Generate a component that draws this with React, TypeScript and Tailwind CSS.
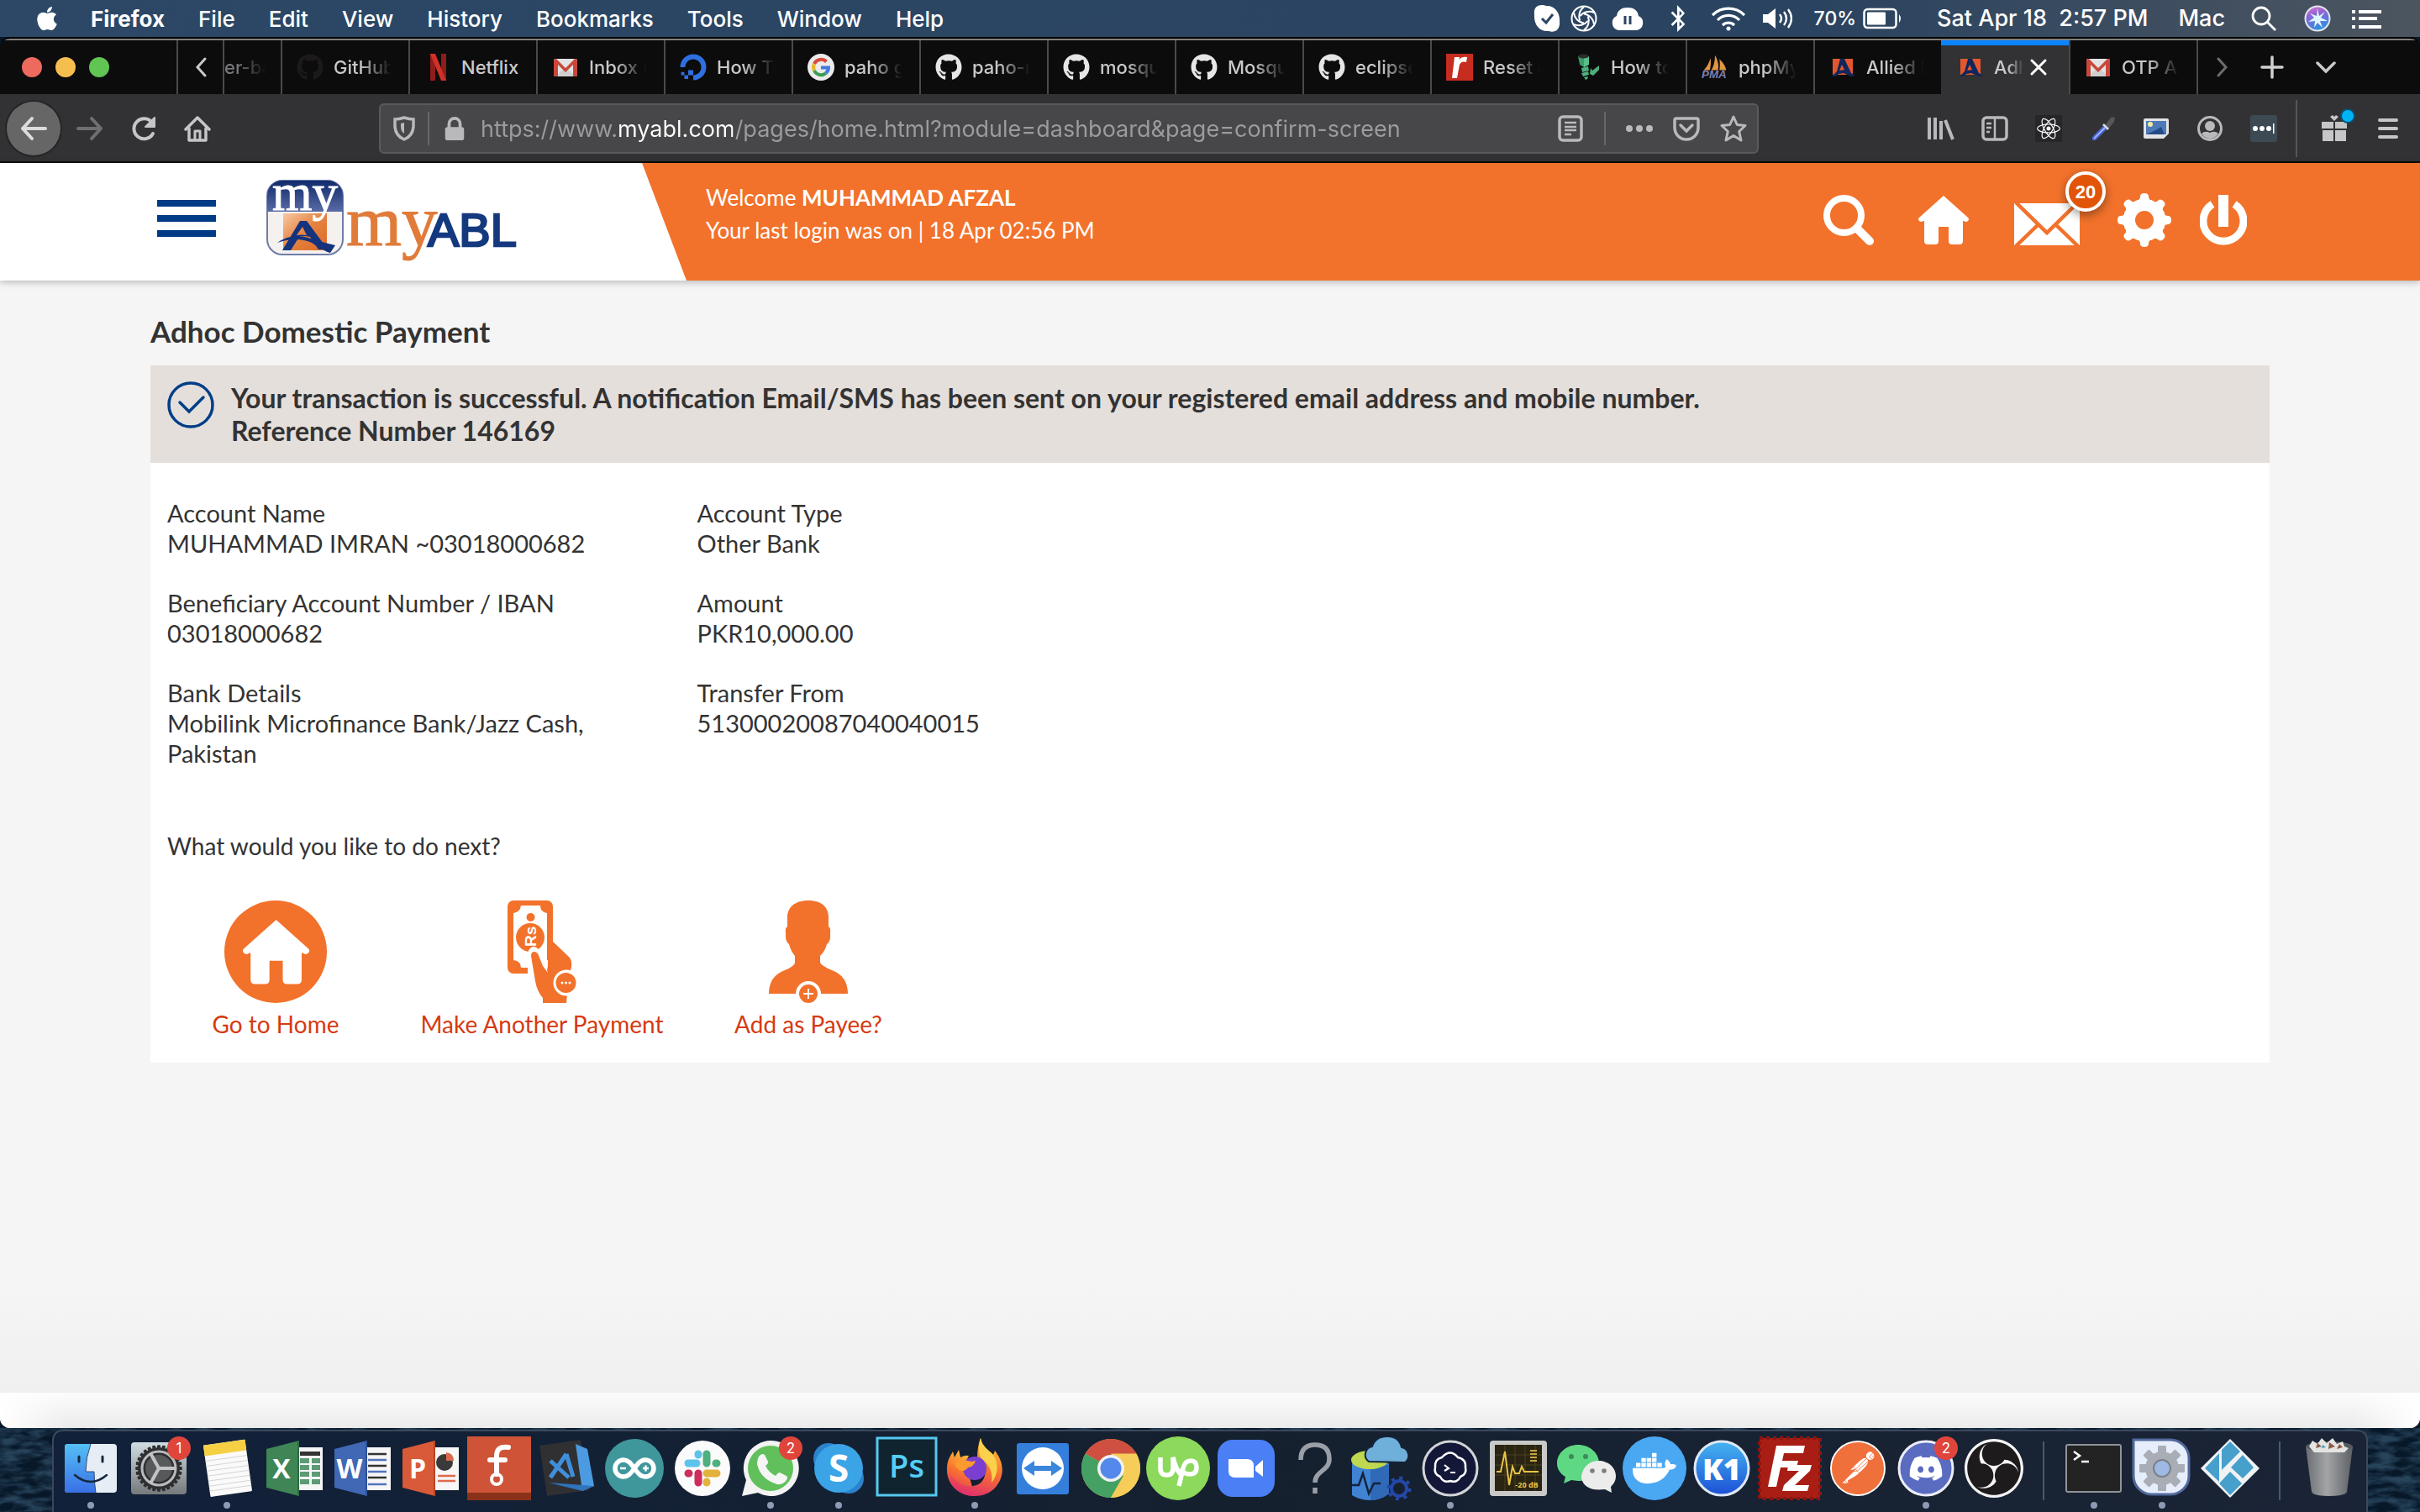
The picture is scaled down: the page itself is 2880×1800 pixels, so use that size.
import React from "react";
import type { ReactNode } from "react";
import {
  FaApple,
  FaGithub,
  FaBluetoothB,
  FaDocker,
  FaDiscord,
  FaDigitalOcean,
  FaReact,
} from "react-icons/fa";
import { SiPostman, SiObsstudio } from "react-icons/si";

/* ---------- macOS menu bar ---------- */

const menus = ["File", "Edit", "View", "History", "Bookmarks", "Tools", "Window", "Help"];

function MenuBar() {
  return (
    <header className="flex h-11 shrink-0 items-center bg-linear-to-r from-[#2c4866] via-[#2a4360] via-75% to-[#4c555f] pr-[46px] pl-10 text-[27px] font-medium text-white">
      <button aria-label="Apple menu" className="w-7">
        <FaApple size={32} />
      </button>
      <nav className="ml-10 flex items-center gap-10 text-[26px]">
        <button className="font-bold">Firefox</button>
        {menus.map((m) => (
          <button key={m}>{m}</button>
        ))}
      </nav>
      <div className="ml-auto flex items-center">
        <svg className="mr-3 size-8" viewBox="0 0 32 32" aria-label="Skype">
          <path fill="#fff" d="M10 0C4 0 0 4 1 11c-1 12 6 21 17 20 8 3 14-3 13-11C32 8 24 0 15 1c-2-1-3-1-5-1z" />
          <path d="M10 16l5 5 8-10" fill="none" stroke="#2b4462" strokeWidth="3" />
        </svg>
        <svg className="mr-4 size-8" viewBox="0 0 32 32" fill="none" stroke="#fff" strokeWidth="2" aria-label="Sync">
          <circle cx="16" cy="16" r="14.5" />
          {[0, 60, 120, 180, 240, 300].map((a) => (
            <path key={a} d="M16 10.500A14 14 0 0 1 28 23" transform={`rotate(${a} 16 16)`} />
          ))}
        </svg>
        <svg className="mr-[30px] h-8 w-10" viewBox="0 0 40 32" aria-label="Cloud backup">
          <path fill="#fff" d="M9 30a9 9 0 0 1-2-17C8 6 13 3 20 3s12 3 13 10a9 9 0 0 1-2 17z" />
          <path d="M17 13v10M23 13v10" stroke="#2b4462" strokeWidth="3" />
        </svg>
        <FaBluetoothB className="mr-[30px] h-8 w-5" aria-label="Bluetooth" />
        <svg className="mr-5 h-8 w-10" viewBox="0 0 40 32" fill="none" stroke="#fff" strokeWidth="3.200" aria-label="Wi-Fi">
          <path d="M1 12a27 27 0 0 1 38 0M7 18a18 18 0 0 1 26 0M13 24a10 10 0 0 1 14 0" />
          <circle cx="20" cy="28" r="2.500" fill="#fff" stroke="none" />
        </svg>
        <svg className="mr-[26px] h-8 w-9" viewBox="0 0 36 32" fill="none" stroke="#fff" strokeWidth="2.400" aria-label="Volume">
          <path d="M1 11h6l9-7v24l-9-7H1z" fill="#fff" stroke="none" />
          <path d="M21 11q4 5 0 10M26 8q6 8 0 16M31 5q8 11 0 22" />
        </svg>
        <span className="text-[23px]">70%</span>
        <svg className="mr-10 ml-2 h-7 w-12" viewBox="0 0 48 28" aria-label="Battery">
          <rect x="1.500" y="3" width="38" height="22" rx="4" fill="none" stroke="#fff" strokeWidth="2.500" />
          <rect x="5" y="6.500" width="22" height="15" rx="1" fill="#fff" />
          <path d="M43 9q4 5 0 10z" fill="#fff" />
        </svg>
        <span className="mr-9 whitespace-pre">Sat Apr 18  2:57 PM</span>
        <span className="mr-[30px]">Mac</span>
        <svg className="mr-8 size-8" viewBox="0 0 32 32" fill="none" stroke="#fff" strokeWidth="2.800" aria-label="Spotlight">
          <circle cx="13" cy="13" r="10" />
          <path d="M20 20l10 10" />
        </svg>
        <svg className="mr-6 size-8" viewBox="0 0 32 32" aria-label="Siri">
          <defs>
            <linearGradient id="siri" x1="0" y1="0" x2="0.300" y2="1">
              <stop offset="0" stopColor="#e879c8" />
              <stop offset="0.400" stopColor="#8e63d6" />
              <stop offset="1" stopColor="#2f8fe0" />
            </linearGradient>
          </defs>
          <circle cx="16" cy="16" r="14.500" fill="url(#siri)" stroke="#e2e6f0" strokeWidth="2" />
          <path d="M16 4l2 9 7-5-5 7 8 4-9 0 3 8-6-6-4 6 1-8-8 1 7-5-5-5 8 3z" fill="#dff6ff" />
        </svg>
        <svg className="h-7 w-9" viewBox="0 0 36 28" stroke="#fff" strokeWidth="4" aria-label="Notifications">
          <path d="M1 6h4M1 14h4M1 24h4M9 6h27M9 14h22M9 24h27" />
        </svg>
      </div>
    </header>
  );
}

/* ---------- favicons ---------- */

const Gmail = () => (
  <svg viewBox="0 0 32 32" className="size-8">
    <rect x="2" y="6" width="28" height="21" rx="2" fill="#e3e3e3" />
    <path d="M4 27l12-11 12 11z" fill="#cfcfcf" />
    <path d="M2 8q0-2 3-2l11 11L27 6q3 0 3 2v17q0 2-2 2h-3V13l-9 9-9-9v14H4q-2 0-2-2z" fill="#c8473a" />
  </svg>
);
const Octocat = () => <FaGithub size={32} color="#e6e6e6" />;
const Allied = () => (
  <svg viewBox="0 0 32 32" className="size-8">
    <rect x="4" y="6" width="24" height="19" fill="#e4572e" />
    <path d="M13 6h5l8 17 5 3-5 1-9-4-6 1-3 3H3l6-6zm2 7l-3 7 6-1z" fill="#10265c" fillRule="evenodd" />
  </svg>
);
const Netflix = () => (
  <svg viewBox="0 0 32 32" className="size-8">
    <path d="M7 0h6v32H7zM20 0h6v32h-6z" fill="#8f1d1a" />
    <path d="M7 0h6l13 32h-6z" fill="#d03028" />
  </svg>
);
const Google = () => (
  <svg viewBox="0 0 32 32" className="size-8">
    <circle cx="16" cy="16" r="16" fill="#ebebeb" />
    <g fill="none" strokeWidth="4">
      <path d="M22.500 9.500A9 9 0 0 0 8 12" stroke="#d9493c" />
      <path d="M8 12a9 9 0 0 0 0 8" stroke="#eab42c" />
      <path d="M8 20a9 9 0 0 0 14 3" stroke="#3b9c55" />
      <path d="M22 23q3-3 3-6.500h-9" stroke="#4079e0" />
    </g>
  </svg>
);
const RedR = () => (
  <svg viewBox="0 0 32 32" className="size-8">
    <rect width="32" height="32" fill="#c62d20" />
    <path d="M10 4h6l-.5 3Q19 3 25 4l-1 6q-6-2-8 3l-3 16H7z" fill="#fff" />
  </svg>
);
const GreenGuy = () => (
  <svg viewBox="0 0 32 32" className="size-8">
    <path d="M5 3l7 2 6-2v10l-6 3-5-3z" fill="#3f9a68" />
    <path d="M12 5l6-2v10l-6 3z" fill="#57c08a" />
    <ellipse cx="11.500" cy="3" rx="6" ry="2.500" fill="#2b2b2b" />
    <path d="M9 17l8-2 1 5-8 2zM9 23l8-2 1 4-7 2zM12 28l5-1-1 3-2 1zM20 17l2 3 8-6v5l-7 7-4-2z" fill="#4fae7c" />
  </svg>
);
const Pma = () => (
  <svg viewBox="0 0 36 32" className="h-8 w-9">
    <path d="M3 20Q9 14 12 4q1 9-1 16zM13 20Q18 12 18 0q6 10 4 20zM24 20q1-7 0-15 8 8 9 15z" fill="#df9642" />
    <text x="0" y="31" fontSize="15" fontWeight="900" fontStyle="italic" fontFamily="Liberation Sans" fill="#7d7fb4">
      PMA
    </text>
  </svg>
);

type Tab = { title: string; icon?: ReactNode; active?: boolean };
const tabs: Tab[] = [
  { title: "GitHub", icon: <FaGithub size={32} color="#1c1919" /> },
  { title: "Netflix", icon: <Netflix /> },
  { title: "Inbox (", icon: <Gmail /> },
  { title: "How To", icon: <FaDigitalOcean size={32} color="#2f6fe0" /> },
  { title: "paho g", icon: <Google /> },
  { title: "paho-m", icon: <Octocat /> },
  { title: "mosqu", icon: <Octocat /> },
  { title: "Mosqu", icon: <Octocat /> },
  { title: "eclipse", icon: <Octocat /> },
  { title: "Reset a", icon: <RedR /> },
  { title: "How to", icon: <GreenGuy /> },
  { title: "phpMy", icon: <Pma /> },
  { title: "Allied B", icon: <Allied /> },
  { title: "Adh", icon: <Allied />, active: true },
  { title: "OTP Al", icon: <Gmail /> },
];

const fade = "overflow-hidden whitespace-nowrap [mask-image:linear-gradient(90deg,#000_45%,transparent_98%)]";

function TabStrip() {
  return (
    <div className="flex h-[66px] items-stretch border-t-2 border-[#80807c] bg-[#0c0c0d] text-[22px] font-medium text-[#c9c9ca]">
      <div className="flex w-[210px] items-center gap-4 pl-[26px]">
        <span className="size-6 rounded-full bg-[#ed6a5e]" />
        <span className="size-6 rounded-full bg-[#f5bf4f]" />
        <span className="size-6 rounded-full bg-[#61c554]" />
      </div>
      <button aria-label="Scroll tabs left" className="flex w-[57px] items-center justify-center border-x-2 border-[#4a4a4b]">
        <svg viewBox="0 0 14 24" className="h-6 w-3.5" fill="none" stroke="#c9c9ca" strokeWidth="3" strokeLinecap="round">
          <path d="M12 2L3 12l9 10" />
        </svg>
      </button>
      <div className="flex w-[67px] items-center">
        <span className="w-[50px] overflow-hidden whitespace-nowrap text-[#77777a] [mask-image:linear-gradient(90deg,#000_30%,transparent)]">er-ba</span>
      </div>
      <div className="flex min-w-0 flex-1">
        {tabs.map((t, i) =>
          t.active ? (
            <div key={i} className="flex min-w-0 flex-1 items-center border-t-[6px] border-[#0a84ff] bg-[#323234] pb-[6px] pl-[19px]">
              {t.icon}
              <span className={`ml-3 w-9 ${fade}`}>{t.title}</span>
              <button aria-label="Close tab" className="ml-1.5">
                <svg viewBox="0 0 22 22" className="size-[22px]" stroke="#fff" strokeWidth="3" strokeLinecap="round">
                  <path d="M3 3l16 16M19 3L3 19" />
                </svg>
              </button>
            </div>
          ) : (
            <button key={i} className="flex min-w-0 flex-1 items-center border-l-2 border-[#4a4a4b] pl-[17px] text-left">
              <span className="flex w-8 shrink-0 justify-center">{t.icon}</span>
              <span className={`ml-3 w-[70px] ${t.title === "Netflix" ? "" : fade}`}>{t.title}</span>
            </button>
          ),
        )}
      </div>
      <div className="flex w-[266px] items-center border-l-2 border-[#4a4a4b] pl-[22px]">
        <button aria-label="Scroll tabs right">
          <svg viewBox="0 0 14 24" className="h-6 w-3.5" fill="none" stroke="#6d6d6e" strokeWidth="3" strokeLinecap="round">
            <path d="M2 2l9 10-9 10" />
          </svg>
        </button>
        <button aria-label="New tab" className="ml-[38px]">
          <svg viewBox="0 0 28 28" className="size-7" stroke="#d0d0d1" strokeWidth="3.500" strokeLinecap="round">
            <path d="M14 2v24M2 14h24" />
          </svg>
        </button>
        <button aria-label="List all tabs" className="ml-[38px]">
          <svg viewBox="0 0 24 24" className="size-6" fill="none" stroke="#c9c9ca" strokeWidth="3.500" strokeLinecap="round">
            <path d="M2 7l10 10L22 7" />
          </svg>
        </button>
      </div>
    </div>
  );
}

/* ---------- toolbar ---------- */

const ic = "size-8 fill-none stroke-[#b9b9bb] stroke-[3.5]";

function Toolbar() {
  return (
    <div className="flex h-[82px] items-center border-b-2 border-[#0c0c0d] bg-[#323234] pt-0.5 pl-2">
      <button aria-label="Back" className="flex size-16 items-center justify-center rounded-full bg-[#666667] ring-2 ring-[#252526]">
        <svg viewBox="0 0 32 32" className="size-8" fill="none" stroke="#dcdcdd" strokeWidth="4" strokeLinecap="round" strokeLinejoin="round">
          <path d="M30 16H3M14 4L3 16l11 12" />
        </svg>
      </button>
      <button aria-label="Forward" className="ml-[19px]">
        <svg viewBox="0 0 32 32" className="size-8" fill="none" stroke="#6f6f70" strokeWidth="4" strokeLinecap="round" strokeLinejoin="round">
          <path d="M2 16h27M18 4l11 12-11 12" />
        </svg>
      </button>
      <button aria-label="Reload" className="ml-8">
        <svg viewBox="0 0 32 32" className="size-8" fill="none" stroke="#c6c6c8" strokeWidth="4" strokeLinecap="round">
          <path d="M27 22A12 12 0 1 1 26 9" />
          <path d="M29 3v11H18z" fill="#c6c6c8" strokeWidth="2" strokeLinejoin="round" />
        </svg>
      </button>
      <button aria-label="Home" className="ml-8">
        <svg viewBox="0 0 32 32" className="size-8" fill="none" stroke="#c6c6c8" strokeWidth="3.500" strokeLinecap="round" strokeLinejoin="round">
          <path d="M2 17L16 3l14 14M6 16v14h20V16" />
          <path d="M13 29V19h6v10" strokeWidth="3" />
        </svg>
      </button>
      <div className="ml-[200px] flex h-[60px] w-[1642px] items-center rounded-md border-2 border-[#5a5a5c] bg-[#474749] pl-3">
        <svg viewBox="0 0 32 32" className={ic} aria-label="Tracking protection">
          <path d="M16 3q6 2 11 2v9q-1 11-11 15Q6 25 5 14V5q5 0 11-2z" />
          <path d="M16 9v13q-4-3-4-8v-4z" fill="#b9b9bb" strokeWidth="0" />
        </svg>
        <span className="ml-3 h-10 w-0.5 bg-[#67676a]" />
        <svg viewBox="0 0 28 32" className="ml-4 h-[30px] w-7" aria-label="Secure connection">
          <path d="M7 16v-6a7 7 0 0 1 14 0v6" fill="none" stroke="#b9b9bb" strokeWidth="4" />
          <rect x="2" y="14" width="24" height="17" rx="3" fill="#b9b9bb" />
        </svg>
        <input
          aria-label="Address"
          readOnly
          value="https://www.myabl.com/pages/home.html?module=dashboard&page=confirm-screen"
          className="ml-[17px] min-w-0 flex-1 bg-[linear-gradient(90deg,#9c9c9e_162px,#fff_162px,#fff_300px,#9c9c9e_300px)] bg-clip-text pt-0.5 text-[27px] text-transparent outline-none"
        />
        <svg viewBox="0 0 32 32" className={ic} aria-label="Reader view">
          <rect x="3" y="2" width="26" height="28" rx="4" />
          <path d="M9 9h14M9 14h14M9 18h14M9 23h8" strokeWidth="2.500" />
        </svg>
        <span className="ml-6 h-10 w-0.5 bg-[#67676a]" />
        <svg viewBox="0 0 32 32" className="ml-6 size-8 fill-[#b9b9bb]" aria-label="Page actions">
          <circle cx="4" cy="16" r="4" />
          <circle cx="16" cy="16" r="4" />
          <circle cx="28" cy="16" r="4" />
        </svg>
        <svg viewBox="0 0 32 32" className={`ml-6 ${ic}`} aria-label="Save to Pocket">
          <path d="M4 4h24q2 0 2 2v9a14 14 0 0 1-28 0V6q0-2 2-2z" />
          <path d="M9 12l7 7 7-7" strokeLinecap="round" />
        </svg>
        <svg viewBox="0 0 32 32" className={`mr-3 ml-6 ${ic}`} aria-label="Bookmark">
          <path d="M16 2l4.300 9.500L30 12.500l-7.300 7L25 30l-9-5.500L7 30l2.300-10.500-7.300-7 9.700-1z" strokeLinejoin="round" strokeWidth="3" />
        </svg>
      </div>
      <div className="ml-auto flex items-center gap-8">
        <svg viewBox="0 0 32 32" className={ic} aria-label="Library">
          <path d="M2 3v26M9 3v26M16 7v22M21 6l9 23" strokeWidth="4" />
        </svg>
        <svg viewBox="0 0 32 32" className={ic} aria-label="Sidebar">
          <rect x="2" y="3" width="28" height="26" rx="4" />
          <path d="M16 3v26M6 10h6M6 15h6M6 20h4" strokeWidth="2.500" />
        </svg>
        <span className="flex size-8 items-center justify-center bg-[#262628]">
          <FaReact size={28} color="#fff" />
        </span>
        <svg viewBox="0 0 32 32" className="size-8" aria-label="Colour picker">
          <path d="M19 12L27 2l4 1-1 5-7 9z" fill="#55555a" />
          <path d="M17 13l4 4L8 30H4v-4z" fill="#4b66d8" />
          <path d="M17 11l6 6" stroke="#d7dcf2" strokeWidth="2.500" />
          <path d="M6 28L19 15" stroke="#b9c6ff" strokeWidth="1.500" />
        </svg>
        <svg viewBox="0 0 32 32" className="size-8" aria-label="Screenshot">
          <path d="M3 4h26q2 0 2 2v16l-6 6H3q-2 0-2-2V6q0-2 2-2z" fill="#e3e3e6" />
          <rect x="4" y="7" width="24" height="16" fill="#4e7bb8" />
          <path d="M4 23h22l-4-9-5 3-4 2z" fill="#234b86" />
          <circle cx="9" cy="11" r="3" fill="#f5e9a0" />
        </svg>
        <svg viewBox="0 0 32 32" className={ic} aria-label="Account">
          <circle cx="16" cy="16" r="13.500" strokeWidth="3" />
          <circle cx="16" cy="13" r="6" fill="#b9b9bb" stroke="none" />
          <path d="M6 22q4-4 10-1 6-3 10 1-4 6-10 6T6 22z" fill="#b9b9bb" stroke="none" />
        </svg>
        <svg viewBox="0 0 32 32" className="size-8" aria-label="Password manager">
          <rect width="32" height="32" rx="3" fill="#3d4a54" />
          <g fill="#fff">
            <circle cx="6" cy="16" r="3" />
            <circle cx="14" cy="16" r="3" />
            <circle cx="22" cy="16" r="3" />
            <rect x="27" y="10" width="1.500" height="12" />
          </g>
        </svg>
      </div>
      <span className="ml-[22px] h-[68px] w-0.5 bg-[#565658]" />
      <button aria-label="What's new" className="relative ml-7">
        <svg viewBox="0 0 32 32" className="size-8 fill-[#c6c6c8]">
          <path d="M1 8h14v8H1zM17 8h14v8H17zM2 18h13v13H2zM17 18h13v13H17zM16 7l-5-5 3-2 2 2 2-2 3 2z" />
        </svg>
        <span className="absolute -top-1.5 right-[-7px] size-3.5 rounded-full bg-[#00b3f4] ring-2 ring-[#0b4f70]" />
      </button>
      <button aria-label="Open menu" className="mr-[26px] ml-9">
        <svg viewBox="0 0 24 28" className="h-7 w-6" stroke="#c6c6c8" strokeWidth="4" strokeLinecap="round">
          <path d="M2 4h20M2 14h20M2 24h20" />
        </svg>
      </button>
    </div>
  );
}

/* ---------- bank site ---------- */

function BankLogo() {
  return (
    <svg viewBox="0 0 300 102" className="ml-[60px] h-[102px] w-[300px]" role="img" aria-label="myABL">
      <defs>
        <linearGradient id="navy" x1="0" y1="0" x2="0" y2="1">
          <stop offset="0" stopColor="#0f2a6b" />
          <stop offset="1" stopColor="#5a6ba6" />
        </linearGradient>
        <linearGradient id="orng" x1="0" y1="0" x2="1" y2="1">
          <stop offset="0" stopColor="#f8c9a4" />
          <stop offset="0.500" stopColor="#e58240" />
          <stop offset="1" stopColor="#dd6a24" />
        </linearGradient>
      </defs>
      <rect x="1" y="1" width="90" height="88" rx="18" fill="#f4f1ef" stroke="#6f7da8" strokeWidth="2" />
      <path d="M1 38V19A18 18 0 0 1 19 1h54a18 18 0 0 1 18 18v19z" fill="url(#navy)" />
      <rect x="20" y="40" width="52" height="44" fill="url(#orng)" />
      <path d="M40 49h8l25 34H62L52 68q-8-2-13 0L29 84H19zM43 56l-7 10q6-1 12 0z" fill="#15337d" fillRule="evenodd" />
      <path d="M13 75q18-13 40-5 12 4 29 8l-6 9q-8-2-22-12-18-8-41 0z" fill="#15337d" />
      <text x="7" y="36" fontSize="61" fontFamily="Liberation Serif" fill="#fff" stroke="#fff">
        my
      </text>
      <text x="95" y="78" fontSize="85" fontFamily="Liberation Serif" fill="#e07b39" stroke="#e07b39">
        my
      </text>
      <text x="192" y="79" fontSize="56" fontFamily="Liberation Sans" fill="#15397f" stroke="#15397f" strokeWidth="2.500">
        ABL
      </text>
    </svg>
  );
}

const homeShape = "M30 0L1 26q-2 2 0 4 2 2 5 0h1v24q0 4 4 4h9q4 0 4-4V37h12v17q0 4 4 4h9q4 0 4-4V30h1q3 2 5 0 2-2 0-4z";

function SiteHeader() {
  return (
    <div className="relative z-10 flex h-[140px] bg-[#f2722b] shadow-[0_2px_8px_rgba(0,0,0,0.25)]">
      <div className="flex w-[817px] shrink-0 items-start bg-white pl-[187px] [clip-path:polygon(0_0,764px_0,100%_100%,0_100%)]">
        <button aria-label="Menu" className="mt-11 flex w-[70px] flex-col gap-2.5">
          <span className="h-2 w-full bg-[#003b86]" />
          <span className="h-2 w-full bg-[#003b86]" />
          <span className="h-2 w-full bg-[#003b86]" />
        </button>
        <div className="mt-5">
          <BankLogo />
        </div>
      </div>
      <div className="pt-[22px] pl-[23px] font-[Lato,sans-serif] text-[26px] leading-[39px] text-white">
        <p>
          Welcome <b>MUHAMMAD AFZAL</b>
        </p>
        <p>Your last login was on | 18 Apr 02:56 PM</p>
      </div>
      <div className="mr-[206px] ml-auto flex h-[136px] items-center text-white">
        <button aria-label="Search">
          <svg viewBox="0 0 60 60" className="size-[60px]" fill="none" stroke="#fff">
            <circle cx="24.500" cy="24.500" r="20.500" strokeWidth="8" />
            <path d="M41 41l14 14" strokeWidth="10" strokeLinecap="round" />
          </svg>
        </button>
        <button aria-label="Home" className="ml-[53px]">
          <svg viewBox="0 0 60 58" className="h-[58px] w-[60px]" fill="#fff">
            <path d={homeShape} />
          </svg>
        </button>
        <button aria-label="Messages, 20 unread" className="relative ml-[54px] mt-2.5">
          <svg viewBox="0 0 78 50" className="h-[50px] w-[78px]">
            <rect width="78" height="50" fill="#fff" />
            <path d="M2-1l37 36L76-1M2 51l27-26M76 51L49 25" fill="none" stroke="#f2722b" strokeWidth="4.500" />
          </svg>
          <span className="absolute -top-[38px] left-[61px] flex size-12 items-center justify-center rounded-full border-4 border-white bg-[#e25407] font-['Liberation_Sans',sans-serif] text-[22px] font-bold shadow-[0_4px_12px_rgba(0,0,0,0.4)]">
            20
          </span>
        </button>
        <button aria-label="Settings" className="ml-[45px]">
          <svg viewBox="0 0 64 64" className="size-16">
            <g fill="#fff">
              <circle cx="32" cy="32" r="25" />
              {[0, 45, 90, 135, 180, 225, 270, 315].map((a) => (
                <path key={a} d="M21 9q6 0 6-5 0-4 5-4t5 4q0 5 6 5l-4 10H25z" transform={`rotate(${a} 32 32)`} />
              ))}
            </g>
            <circle cx="32" cy="32" r="11" fill="#f2722b" />
          </svg>
        </button>
        <button aria-label="Log out" className="ml-[34px]">
          <svg viewBox="0 0 56 60" className="h-[60px] w-14" fill="none" stroke="#fff">
            <path d="M15 11a24 24 0 1 0 26 0" strokeWidth="9" />
            <path d="M28 0v38" strokeWidth="12" />
          </svg>
        </button>
      </div>
    </div>
  );
}

const details: [string, string][] = [
  ["Account Name", "MUHAMMAD IMRAN ~03018000682"],
  ["Account Type", "Other Bank"],
  ["Beneficiary Account Number / IBAN", "03018000682"],
  ["Amount", "PKR10,000.00"],
  ["Bank Details", "Mobilink Microfinance Bank/Jazz Cash, Pakistan"],
  ["Transfer From", "51300020087040040015"],
];

const HomeAction = () => (
  <svg viewBox="0 0 122 122" className="size-[122px]">
    <circle cx="61" cy="61" r="61" fill="#f2722b" />
    <path d={homeShape} fill="#fff" transform="translate(22 23) scale(1.320)" />
  </svg>
);
const PayAction = () => (
  <svg viewBox="0 0 82 122" className="h-[122px] w-[82px]">
    <rect width="54" height="87" rx="7" fill="#f2722b" />
    <path d="M16 6h23q0 8 8 9v70H25V80h-9q0-8-9-9V15q8-1 9-9z" fill="#fff" />
    <circle cx="27.500" cy="20" r="5" fill="#f2722b" />
    <circle cx="27" cy="44" r="17" fill="#f2722b" />
    <text transform="translate(34 55) rotate(-90)" fontSize="19" fontWeight="700" fontFamily="Liberation Sans" fill="#fff">
      Rs
    </text>
    <path d="M24 90V64q1-9 8-9 6 1 9 13l6 18 1-3-1-5v-7h8v50z" fill="#fff" />
    <path d="M54 49l20 19q3 5 2 11l-3 12-3 31H42V116q-7-8-9-20L28 66q0-5 4-5t6 7l4 10 6 8V49z" fill="#f2722b" />
    <circle cx="70" cy="98" r="15.500" fill="#fff" />
    <circle cx="69.500" cy="98" r="12" fill="#f2722b" />
    <g fill="#fff">
      <circle cx="65" cy="98" r="1.500" />
      <circle cx="69.500" cy="98" r="1.500" />
      <circle cx="74" cy="98" r="1.500" />
    </g>
  </svg>
);
const PayeeAction = () => (
  <svg viewBox="0 0 94 122" className="h-[122px] w-[94px]">
    <path
      d="M47 0c17 0 24 9 24 20v11q3 2 2 8 1 10-4 13-2 8-8 14v8q2 4 14 9 19 7 19 28H0Q0 90 19 83q12-5 12-9v-8q-5-6-7-14-5-4-4-13-1-6 2-8V20C22 9 30 0 47 0z"
      fill="#f2722b"
    />
    <circle cx="47" cy="111" r="15" fill="#fff" />
    <circle cx="47" cy="111" r="11" fill="#f2722b" />
    <path d="M47 105v12M41 111h12" stroke="#fff" strokeWidth="1.800" />
  </svg>
);

function PaymentPage() {
  return (
    <main className="flex flex-1 flex-col bg-linear-to-b from-[#f5f5f5] from-90% to-[#f0f0f0] px-[179px] font-[Lato,sans-serif] text-[29px] leading-9 text-[#333]">
      <h1 className="pt-[38px] pb-[19px] text-[35px] leading-[44px] font-bold">Adhoc Domestic Payment</h1>
      <div role="status" className="flex items-start gap-5 bg-[#e5dfdc] px-5 pt-[19px] pb-4">
        <svg viewBox="0 0 56 56" className="size-[56px]" fill="none" stroke="#003f87" strokeWidth="3.500">
          <circle cx="28" cy="28" r="26" />
          <path d="M15 25l11 11 17-17" strokeLinecap="round" />
        </svg>
        <p className="pb-[3px] text-[32px] leading-[39px] font-bold">
          Your transaction is successful. A notification Email/SMS has been sent on your registered email address and mobile number.
          <br />
          Reference Number 146169
        </p>
      </div>
      <section className="bg-white pt-[42px]">
        <dl className="grid w-1/2 grid-cols-2 gap-y-[35px]">
          {details.map(([k, v]) => (
            <div key={k} className="px-5">
              <dt>{k}</dt>
              <dd>{v}</dd>
            </div>
          ))}
        </dl>
        <p className="mt-[74px] px-5 text-[28px]">What would you like to do next?</p>
        <div className="mt-[47px] flex pb-7 pl-5 text-[28px] text-[#d63a11]">
          <a href="#home" className="flex w-[258px] flex-col items-center gap-[7px]">
            <HomeAction />
            Go to Home
          </a>
          <a href="#payment" className="flex w-[376px] flex-col items-center gap-[7px]">
            <PayAction />
            Make Another Payment
          </a>
          <a href="#payee" className="flex w-[258px] flex-col items-center gap-[7px]">
            <PayeeAction />
            Add as Payee?
          </a>
        </div>
      </section>
    </main>
  );
}

/* ---------- dock ---------- */

const T = ({ x, y, s, f, w = 700, children }: { x: number; y: number; s: number; f: string; w?: number; children: string }) => (
  <text x={x} y={y} fontSize={s} fill={f} fontWeight={w} fontFamily="Open Sans, sans-serif" textAnchor="middle">
    {children}
  </text>
);

const Disc = ({ r = 33, fill, ring }: { r?: number; fill: string; ring?: string }) => (
  <circle cx="38" cy="38" r={r} fill={fill} stroke={ring} strokeWidth={ring ? 3 : 0} />
);

const Gear = ({ r, n, fill, tooth }: { r: number; n: number; fill: string; tooth: number }) => (
  <g fill={fill}>
    <circle cx="38" cy="38" r={r} />
    {Array.from({ length: n }, (_, i) => (
      <rect key={i} x={38 - tooth / 2} y={38 - r - tooth * 0.7} width={tooth} height={tooth * 1.4} rx="1" transform={`rotate(${(i * 360) / n} 38 38)`} />
    ))}
  </g>
);

function Office({ color, dark, letter, children }: { color: string; dark: string; letter: string; children: ReactNode }) {
  return (
    <>
      <rect x="34" y="13" width="37" height="51" fill="#f6f6f6" />
      {children}
      <path d="M4 15l39-10v66L4 61z" fill={color} />
      <path d="M41 6l2-1v66l-2-1z" fill={dark} />
      <T x={22} y={50} s={32} f="#fff">{letter}</T>
    </>
  );
}

type DockApp = { name: string; running?: boolean; badge?: string; art: ReactNode };

const apps: DockApp[] = [
  {
    name: "Finder",
    running: true,
    art: (
      <>
        <rect x="7" y="9" width="62" height="58" rx="4" fill="#e6edf5" />
        <path d="M11 9h27q-6 16-6 33h10q0 13 2 25H11q-4 0-4-4V13q0-4 4-4z" fill="url(#finder)" />
        <path d="M38 9q-6 16-6 33h10q0 13 2 25" fill="none" stroke="#2b4a78" strokeWidth="1" />
        <path d="M24 24v6M52 24v6" stroke="#16283c" strokeWidth="3" strokeLinecap="round" />
        <path d="M19 46q19 16 38 0" fill="none" stroke="#16283c" strokeWidth="2.500" strokeLinecap="round" />
      </>
    ),
  },
  {
    name: "System Preferences",
    badge: "1",
    art: (
      <>
        <rect x="5" y="7" width="66" height="62" rx="4" fill="url(#steel)" />
        <Gear r={25} n={28} fill="#2f2f31" tooth={4} />
        <circle cx="38" cy="38" r="20" fill="none" stroke="#b9bbbd" strokeWidth="3" />
        <circle cx="38" cy="38" r="16" fill="#58595b" />
        <path d="M38 38L28 20M38 38h20M38 38L28 56" stroke="#c2c4c6" strokeWidth="4" />
      </>
    ),
  },
  {
    name: "Notes",
    running: true,
    art: (
      <g transform="rotate(-8 38 38)">
        <rect x="14" y="7" width="50" height="62" rx="1" fill="#fafafa" />
        <rect x="14" y="7" width="50" height="13" fill="#f6d043" />
        <path d="M14 26h50M14 32h50M14 38h50M14 44h50M14 50h50M14 56h50M14 62h50" stroke="#d5d5d5" />
      </g>
    ),
  },
  {
    name: "Excel",
    art: (
      <Office color="#3f8556" dark="#2d6a41" letter="X">
        <path d="M44 18h24v5H44z" fill="#333" />
        <path d="M44 26h11v6H44zM58 26h10v6H58zM44 34h11v6H44zM58 34h10v6H58zM44 42h11v6H44zM58 42h10v6H58zM44 51h11v6H44zM58 51h10v6H58z" fill="#5d9a75" />
      </Office>
    ),
  },
  {
    name: "Word",
    art: (
      <Office color="#4068b4" dark="#2f5196" letter="W">
        <path d="M44 21h22M44 35h22M44 49h22" stroke="#333" strokeWidth="2.500" />
        <path d="M44 28h22M44 42h22M44 57h22" stroke="#5273bd" strokeWidth="2.500" />
      </Office>
    ),
  },
  {
    name: "PowerPoint",
    art: (
      <Office color="#d95a38" dark="#b84426" letter="P">
        <circle cx="54" cy="31" r="10" fill="#3a3a3a" />
        <path d="M56 29V19q9 1 9 10z" fill="#dd6a4c" />
        <path d="M46 47h21M46 53h21" stroke="#dd6a4c" strokeWidth="2.500" />
      </Office>
    ),
  },
  {
    name: "Fritzing",
    art: (
      <>
        <path d="M0 0h76v76H0z" fill="#cf5336" />
        <path d="M0 67h76v9H0z" fill="#8a3219" />
        <path d="M49 13q-14-2-14 10v22M27 28h18" fill="none" stroke="#fff" strokeWidth="6" strokeLinecap="round" />
        <circle cx="35" cy="51" r="6" fill="none" stroke="#fff" strokeWidth="4" />
      </>
    ),
  },
  {
    name: "Visual Studio Code",
    art: (
      <>
        <path d="M5 11L54 4l10 60-50 7z" fill="#303033" />
        <path d="M48 9l14 6 8 44-14 6z" fill="#4c9be2" />
        <path d="M16 55l54 4-14 6z" fill="#2f74bd" />
        <path d="M18 29l22 20M37 21L18 49M37 21l8 27" stroke="#3f8fdb" strokeWidth="5" fill="none" />
      </>
    ),
  },
  {
    name: "Arduino",
    art: (
      <>
        <Disc r={35} fill="#3f979c" />
        <g fill="none" stroke="#fff" strokeWidth="5.500">
          <path d="M38 38c-5-7-8-10-13-10a10 10 0 0 0 0 20c5 0 8-3 13-10zM38 38c5-7 8-10 13-10a10 10 0 0 1 0 20c-5 0-8-3-13-10z" />
          <path d="M21 38h7M48 38h7M51.500 34.500v7" strokeWidth="2.500" />
        </g>
      </>
    ),
  },
  {
    name: "Slack",
    art: (
      <>
        <Disc fill="#fbfbfb" />
        <g strokeWidth="9" strokeLinecap="round">
          <path d="M21 32h10M33 21v1" stroke="#5cc3ea" />
          <path d="M43 21v11M54 32h1" stroke="#4fb07f" />
          <path d="M43 44h12M43 54v1" stroke="#e3b23c" />
          <path d="M33 44v11M21 44h1" stroke="#ce2d5d" />
        </g>
      </>
    ),
  },
  {
    name: "WhatsApp",
    running: true,
    badge: "2",
    art: (
      <>
        <path d="M38 5a33 33 0 1 1-15 62L4 71l5-19A33 33 0 0 1 38 5z" fill="#f3f3f3" />
        <circle cx="38" cy="38" r="27" fill="#61c05b" />
        <path
          d="M26 22q3-2 5 0l4 8q1 2-3 5 4 8 12 12 3-4 5-4l8 4q2 2 0 5-4 6-11 5-20-6-24-24 0-8 4-11z"
          fill="#f5f5f5"
        />
      </>
    ),
  },
  {
    name: "Skype",
    running: true,
    art: (
      <>
        <circle cx="26" cy="26" r="18" fill="#2c83cd" />
        <circle cx="50" cy="50" r="18" fill="#2c83cd" />
        <circle cx="38" cy="38" r="29" fill="#3ba4e6" />
        <T x={38} y={54} s={44} f="#fff">S</T>
      </>
    ),
  },
  {
    name: "Photoshop",
    art: (
      <>
        <rect x="3" y="2" width="70" height="68" fill="#10242f" stroke="#55c8f0" strokeWidth="3" />
        <T x={38} y={49} s={38} f="#55cdf7" w={600}>Ps</T>
      </>
    ),
  },
  {
    name: "Firefox",
    running: true,
    art: (
      <>
        <path d="M38 71C18 71 4 56 5 38c0-9 4-15 7-20l2 7 5-9 2 9q5-3 10-2l-4 8z" fill="url(#fox)" />
        <path d="M45 2c2 11 10 14 15 20l2-5c8 10 11 22 7 33C64 63 53 71 38 71 20 71 8 60 8 44c8 12 20 18 32 14 9-3 13-14 9-24q-2-5-8-9 0-12 4-23z" fill="url(#fox)" />
        <path d="M45 2c2 11 10 14 15 20 7 10 6 24-2 33 2-13-3-22-12-28-4-8-4-17-1-25z" fill="#fbd04a" />
        <circle cx="38" cy="38" r="14" fill="#7a3fd0" />
        <path d="M14 32q8-6 20-2l5-1q-2 7-9 8-6 8-14 0z" fill="#fb9b2e" />
      </>
    ),
  },
  {
    name: "TeamViewer",
    art: (
      <>
        <rect x="7" y="8" width="62" height="61" rx="3" fill="#357fdc" />
        <circle cx="38" cy="38" r="25" fill="#fff" />
        <path d="M15 38l13-9v6h20v-6l13 9-13 9v-6H28v6z" fill="#3a86dd" />
      </>
    ),
  },
  {
    name: "Chrome",
    art: (
      <>
        <Disc r={35} fill="#e9c24e" />
        <path d="M38 38L7.700 20.500a35 35 0 0 1 60.600 0z" fill="#cf4f40" />
        <path d="M38 38L7.700 20.500A35 35 0 0 0 38 73l15-26z" fill="#45a163" />
        <path d="M68.300 20.500H38L53 47 38 73a35 35 0 0 0 30.300-52.500z" fill="#f6cd58" />
        <circle cx="38" cy="38" r="16" fill="#f1f1f1" />
        <circle cx="38" cy="38" r="12.500" fill="#5488ea" />
      </>
    ),
  },
  {
    name: "Upwork",
    art: (
      <>
        <Disc r={38} fill="#8cd95b" />
        <path d="M17 25v13q0 8 7.500 8T32 38V25q4 16 9 20M39 59l5-21q2-9 9-9t7 8-8 8q-7 0-12-6" fill="none" stroke="#fff" strokeWidth="5.500" />
      </>
    ),
  },
  {
    name: "Zoom",
    art: (
      <>
        <rect x="4" y="4" width="68" height="68" rx="18" fill="#4a7ff6" />
        <path d="M17 27h22q8 0 8 8v14H25q-8 0-8-8zM49 36l9-8v20l-9-7z" fill="#fff" />
      </>
    ),
  },
  {
    name: "Unknown application",
    art: <path d="M22 28q0-18 17-18t17 17c0 14-17 14-17 28M39 61v7" fill="none" stroke="#9a9fa7" strokeWidth="5.500" />,
  },
  {
    name: "SQL Studio",
    art: (
      <>
        <path d="M2 32h44v36q-10 8-22 8T2 70z" fill="#3f83d2" />
        <path d="M24 34h22v34q-10 8-22 8z" fill="#2f69b8" />
        <ellipse cx="23" cy="28" rx="22" ry="11" fill="#bfd84f" />
        <path d="M22 30a10 10 0 0 1 4-18q4-12 18-12t17 13a10 10 0 0 1 4 18z" fill="#6fb0da" stroke="#16253a" strokeWidth="2" />
        <path d="M2 58h8l5-14 7 24 6-12h8" fill="none" stroke="#14233b" strokeWidth="2.500" />
        <circle cx="58" cy="62" r="9" fill="none" stroke="#2448a6" strokeWidth="4" />
        <circle cx="58" cy="62" r="12.500" fill="none" stroke="#2448a6" strokeWidth="4" strokeDasharray="4 5.800" />
      </>
    ),
  },
  {
    name: "Termius",
    running: true,
    art: (
      <>
        <Disc r={32} fill="#141838" ring="#d2d4d8" />
        <path d="M28 25q10-11 19 0 10 2 9 12 2 8-6 11-4 8-12 5-8 3-12-5-8-3-6-11-1-10 8-12z" fill="none" stroke="#fff" strokeWidth="2.500" />
        <path d="M31 34l5 4-5 3M38 43h6" fill="none" stroke="#fff" strokeWidth="2.200" />
      </>
    ),
  },
  {
    name: "Audio Monitor",
    art: (
      <>
        <rect x="4" y="5" width="68" height="66" rx="4" fill="#c9cac8" />
        <rect x="10" y="10" width="56" height="55" fill="#2a2413" />
        <path d="M22 10v55M34 10v55M46 10v55M58 10v55M10 22h56M10 34h56M10 46h56" stroke="#4a421f" />
        <path d="M12 42h5l5-24 5 40 4-22 3 8h5l3-8 3 6h17" fill="none" stroke="#e8c443" strokeWidth="2" />
        <path d="M52 17h8M52 21h8M52 25h8M52 29h8" stroke="#c7a63a" strokeWidth="2" />
        <T x={48} y={61} s={9} f="#e8c443">-20 dB</T>
      </>
    ),
  },
  {
    name: "WeChat",
    art: (
      <>
        <path d="M28 10c13 0 25 9 25 22S41 53 28 53l-8-1-9 4 2-8C6 44 3 38 3 32c0-13 12-22 25-22z" fill="#5fd883" />
        <path d="M52 29c12 0 21 8 21 18 0 6-3 10-6 13l1 7-8-4q-24 3-28-13c0-12 9-21 20-21z" fill="#ececec" />
        <g fill="#3d8b56">
          <circle cx="20" cy="24" r="3" />
          <circle cx="37" cy="24" r="3" />
        </g>
        <g fill="#7d7d7d">
          <circle cx="45" cy="41" r="2.800" />
          <circle cx="59" cy="41" r="2.800" />
        </g>
      </>
    ),
  },
  {
    name: "Docker",
    art: (
      <>
        <Disc r={38} fill="#4aa8f3" />
        <FaDocker x="12" y="12" size={52} color="#fff" />
      </>
    ),
  },
  {
    name: "Kite",
    art: (
      <>
        <Disc r={32} fill="url(#kblue)" ring="#dfe9f5" />
        <T x={38} y={52} s={36} f="#fff" w={800}>K1</T>
      </>
    ),
  },
  {
    name: "FileZilla",
    art: (
      <>
        <rect x="2" y="2" width="72" height="72" fill="#a81e15" />
        <rect x="2" y="2" width="72" height="72" fill="none" stroke="#8e150f" strokeWidth="4" strokeDasharray="4 4" />
        <path d="M22 11h34l-2 9H31l-2 9h19l-2 8H27l-5 23H12z" fill="#fff" />
        <path d="M36 34h28l-2 7-18 17h17l-2 7H29l2-7 18-17H35z" fill="#fff" />
      </>
    ),
  },
  {
    name: "Postman",
    art: (
      <>
        <Disc fill="#fff" />
        <SiPostman x="7" y="7" size={62} color="#f0703c" />
      </>
    ),
  },
  {
    name: "Discord",
    running: true,
    badge: "2",
    art: (
      <>
        <Disc r={32} fill="#5a6cc0" ring="#eceef6" />
        <FaDiscord x="17" y="17" size={42} color="#fff" />
      </>
    ),
  },
  {
    name: "OBS",
    art: (
      <>
        <Disc r={34} fill="#1d1b1c" />
        <SiObsstudio x="3" y="3" size={70} color="#f4f4f4" />
      </>
    ),
  },
];

const utilities: DockApp[] = [
  {
    name: "Terminal",
    running: true,
    art: (
      <>
        <rect x="5" y="10" width="65" height="56" rx="2" fill="#232323" stroke="#8f9496" strokeWidth="2" />
        <path d="M14 18l7 5-7 5M23 30h9" fill="none" stroke="#fff" strokeWidth="2.500" />
      </>
    ),
  },
  {
    name: "Automator",
    running: true,
    art: (
      <>
        <path d="M4 4h44a22 22 0 0 1 22 22v21a22 22 0 0 1-22 22H26A22 22 0 0 1 4 47z" fill="#e7eefb" stroke="#51699c" strokeWidth="3" />
        <Gear r={20} n={8} fill="#a9adb5" tooth={10} />
        <circle cx="38" cy="38" r="10" fill="#9db9e4" stroke="#7d8088" strokeWidth="2" />
      </>
    ),
  },
  {
    name: "Kodi",
    art: (
      <>
        <path d="M38 3l35 35-35 35L3 38z" fill="#f0f2f4" />
        <path d="M38 6l12 12-22 22V16zM25 20v34L8 38zM53 22l13 15-13 13-14-13zM38 42l14 14-14 14-13-14z" fill="#479fcb" />
      </>
    ),
  },
];

const trash: DockApp = {
  name: "Trash",
  art: (
    <>
      <path d="M10 12h56l-7 54q-2 5-21 5t-21-5z" fill="url(#bin)" />
      <ellipse cx="38" cy="12" rx="28" ry="6" fill="#55595d" />
      <path d="M14 12l4-7 6 4 5-7 6 6 7-6 5 7 7-3 2 6 5 2-5 5H20z" fill="#e4e4e2" />
      <path d="M24 8l5 4-7 2zM38 7l7 5-8 3zM50 9l4 4-7 2z" fill="#8b5a44" />
      <path d="M30 10l4 3-5 1z" fill="#3d9fc2" />
    </>
  ),
};

function DockIcon({ app }: { app: DockApp }) {
  return (
    <button aria-label={app.name} className="flex min-w-0 flex-1 flex-col items-center">
      <svg viewBox="0 0 76 76" className="size-[76px]">
        {app.art}
        {app.badge && (
          <>
            <circle cx="62" cy="14" r="14" fill="#e0453b" />
            <text x="62" y="20" fontSize="17" fill="#fff" textAnchor="middle" fontFamily="Inter">
              {app.badge}
            </text>
          </>
        )}
      </svg>
      {app.running && <span className="mt-0.5 size-2 rounded-full bg-[#8d9bb4]" />}
    </button>
  );
}

function Dock() {
  return (
    <footer className="relative flex h-[100px] shrink-0 overflow-hidden bg-[#071829] px-[62px] pt-0.5">
      <svg className="absolute inset-0 size-full opacity-40" aria-hidden="true">
        <filter id="sea">
          <feTurbulence type="fractalNoise" baseFrequency="0.040 0.120" numOctaves="3" />
          <feColorMatrix values="0 0 0 0 0.100  0 0 0 0 0.240  0 0 0 0 0.380  2.600 0 0 0 -0.900" />
        </filter>
        <rect width="100%" height="100%" filter="url(#sea)" />
      </svg>
      <svg className="absolute size-0" aria-hidden="true">
        <defs>
          <linearGradient id="finder" x1="0" y1="0" x2="0" y2="1">
            <stop offset="0" stopColor="#54c0f4" />
            <stop offset="1" stopColor="#3a6fe6" />
          </linearGradient>
          <linearGradient id="steel" x1="0" y1="0" x2="0" y2="1">
            <stop offset="0" stopColor="#d0dde2" />
            <stop offset="1" stopColor="#77797b" />
          </linearGradient>
          <linearGradient id="fox" x1="0.700" y1="0" x2="0.400" y2="1">
            <stop offset="0" stopColor="#fdc63b" />
            <stop offset="0.500" stopColor="#f9732f" />
            <stop offset="1" stopColor="#e0306b" />
          </linearGradient>
          <linearGradient id="kblue" x1="0" y1="0" x2="0" y2="1">
            <stop offset="0" stopColor="#45b5f0" />
            <stop offset="1" stopColor="#1c4fd6" />
          </linearGradient>
          <linearGradient id="bin" x1="0" y1="0" x2="1" y2="0">
            <stop offset="0" stopColor="#6b6e71" />
            <stop offset="0.450" stopColor="#a3a5a7" />
            <stop offset="1" stopColor="#5d6063" />
          </linearGradient>
        </defs>
      </svg>
      <div className="relative flex min-w-0 flex-1 rounded-t-xl border-2 border-b-0 border-[#3b485b] bg-linear-to-r from-[#11213a] via-[#15202f] to-[#1a2436] pt-1.5 pr-[3px] pl-1">
        {apps.map((a) => (
          <DockIcon key={a.name} app={a} />
        ))}
        <span className="mx-[18px] mt-1.5 h-[70px] w-0.5 shrink-0 bg-[#4c586b]" />
        {utilities.map((a) => (
          <DockIcon key={a.name} app={a} />
        ))}
        <span className="mx-[18px] mt-1.5 h-[70px] w-0.5 shrink-0 bg-[#4c586b]" />
        <DockIcon app={trash} />
      </div>
    </footer>
  );
}

export default function App() {
  return (
    <div className="flex min-h-screen flex-col bg-[#071829] font-[Inter,sans-serif]">
      <MenuBar />
      <div className="flex flex-1 flex-col overflow-hidden rounded-xl border-t-2 border-black">
        <TabStrip />
        <Toolbar />
        <SiteHeader />
        <PaymentPage />
        <div className="h-[42px] bg-[linear-gradient(90deg,#fff,transparent_80px,transparent_calc(100%-80px),#fff),linear-gradient(180deg,#fcfcfc,#ebebeb)]" />
      </div>
      <Dock />
    </div>
  );
}
